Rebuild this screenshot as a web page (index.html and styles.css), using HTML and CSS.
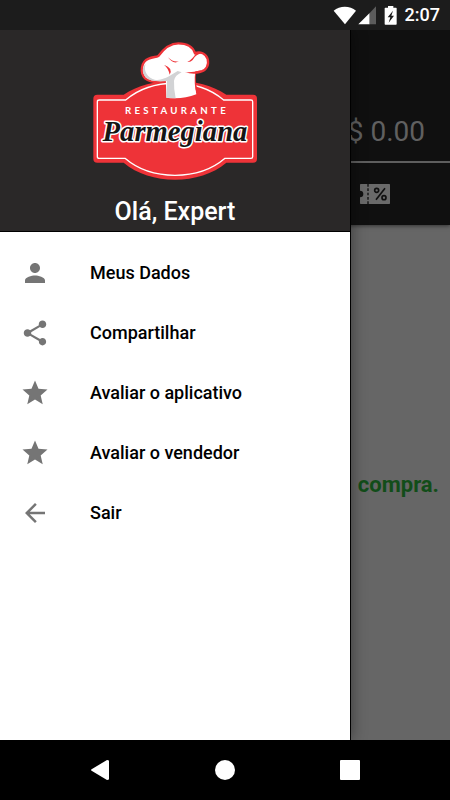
FILE: index.html
```html
<!DOCTYPE html>
<html lang="pt-BR">
<head>
<meta charset="utf-8">
<meta name="viewport" content="width=device-width, initial-scale=1">
<title>Restaurante Parmegiana</title>
<link rel="stylesheet" href="styles.css">
</head>
<body>
<div class="phone">
  <header class="status">
    <svg class="status-icons" width="68" height="20" viewBox="0 0 204 60" aria-hidden="true">
      <path fill="#fff" d="M2 17C20 1 51 1 69 17L36 58Z"/>
      <path fill="#fff" d="M76 58L110 24V58Z"/>
      <path fill="#5c5c5c" d="M110 24L129 4V58H110Z"/>
      <path fill="#fff" d="M165 3h16v5h8q2 0 2 2v47q0 2-2 2h-32q-2 0-2-2V10q0-2 2-2h8Z"/>
      <path fill="#1c1c1c" d="M180 17L164 37h8l-5 16 16-21h-8Z"/>
    </svg>
    <time class="clock">2:07</time>
  </header>

  <div class="screen">
    <main class="page">
      <section class="account">
        <p class="balance">$ 0.00</p>
        <div class="tabs">
          <button class="tab" type="button" aria-label="Cupons">
            <svg width="30" height="20" viewBox="0 0 90 60" aria-hidden="true">
              <path fill="#6a6a6a" d="M2 0H88q2 0 2 2V58q0 2-2 2H2q-2 0-2-2V40a10 10 0 0 0 0-20V2q0-2 2-2Z"/>
              <path stroke="#101010" stroke-width="4" stroke-dasharray="8 5" d="M24 0V60"/>
              <g fill="none" stroke="#101010" stroke-width="5">
                <circle cx="50" cy="19" r="6"/><circle cx="72" cy="41" r="6"/><path d="M75 13L48 47"/>
              </g>
            </svg>
          </button>
        </div>
      </section>
      <section class="empty"><p>compra.</p></section>
    </main>

    <aside class="drawer">
      <div class="profile">
        <svg class="logo" width="180" height="150" viewBox="0 0 540 450" role="img" aria-label="Restaurante Parmegiana">
          <path fill="#ee3338" d="M37 179H116C195 123 345 123 424 179H504Q516 179 516 191V371Q516 383 504 383H424C345 451 195 451 116 383H37Q25 383 25 371V191Q25 179 37 179Z"/>
          <path fill="none" stroke="#fff" stroke-width="4" d="M43 195H122C201 128 337 128 416 195H498Q503 195 503 200V365Q503 370 498 370H420C341 438 199 438 120 370H43Q37 370 37 365V200Q37 195 43 195Z"/>
          <path fill="#fff" stroke="#ee3338" stroke-width="7" stroke-linejoin="round" d="M246 139C222 143 195 142 180 130C165 113 167 81 191 71C203 65 213 67 220 63C236 41 256 25 280 25C305 25 324 36 330 55C345 47 364 57 368 72C373 91 363 106 348 110L330 113Q325 140 337 174"/>
          <path fill="#fff" d="M242 118L331 108Q326 145 334 178Q292 194 244 188Z"/>
          <path fill="#d2d3d5" d="M182 87C174 108 188 129 209 134C226 137 242 129 252 124L278 108L290 112Q270 121 267 137Q266 162 272 190L244 188L246 138C221 141 194 139 182 127C170 113 171 96 182 87Z"/>
          <path fill="#fff" d="M196 78C178 92 181 119 202 130C222 137 242 129 256 118L255 92Z"/>
          <path fill="#ee3338" d="M249 67Q263 82 282 79Q264 89 249 67ZM237 89Q250 99 254 119Q265 99 237 89ZM307 81Q323 73 333 55Q346 51 352 54Q331 58 323 75Q317 82 307 81ZM300 111Q318 114 348 106L348 114Q319 119 300 111Z"/>
          <text class="logo-small" x="276" y="236" text-anchor="middle">RESTAURANTE</text>
          <text class="logo-name" x="270" y="318" text-anchor="middle">Parmegiana</text>
        </svg>
        <h1 class="greeting">Olá, Expert</h1>
      </div>
      <nav class="menu">
        <a class="item" href="#dados">
          <svg width="30" height="30" viewBox="0 0 24 24" aria-hidden="true"><path d="M12 12c2.21 0 4-1.79 4-4s-1.79-4-4-4-4 1.79-4 4 1.79 4 4 4zm0 2c-2.67 0-8 1.34-8 4v2h16v-2c0-2.66-5.33-4-8-4z"/></svg>
          <span>Meus Dados</span>
        </a>
        <a class="item" href="#compartilhar">
          <svg width="30" height="30" viewBox="0 0 24 24" aria-hidden="true"><path d="M18 16.080c-.76 0-1.440.3-1.960.77L8.910 12.700c.05-.23.09-.46.09-.7s-.04-.47-.09-.7l7.050-4.110c.54.5 1.250.81 2.040.81 1.660 0 3-1.340 3-3s-1.340-3-3-3-3 1.340-3 3c0 .24.04.47.09.7L8.040 9.810C7.500 9.310 6.790 9 6 9c-1.660 0-3 1.340-3 3s1.340 3 3 3c.79 0 1.500-.31 2.040-.81l7.120 4.160c-.05.21-.08.43-.08.65 0 1.610 1.310 2.920 2.920 2.920s2.920-1.310 2.920-2.920-1.310-2.920-2.920-2.920z"/></svg>
          <span>Compartilhar</span>
        </a>
        <a class="item" href="#avaliar-aplicativo">
          <svg width="30" height="30" viewBox="0 0 24 24" aria-hidden="true"><path d="M12 17.270L18.180 21l-1.640-7.030L22 9.240l-7.190-.61L12 2 9.190 8.630 2 9.240l5.460 4.730L5.820 21z"/></svg>
          <span>Avaliar o aplicativo</span>
        </a>
        <a class="item" href="#avaliar-vendedor">
          <svg width="30" height="30" viewBox="0 0 24 24" aria-hidden="true"><path d="M12 17.270L18.180 21l-1.640-7.030L22 9.240l-7.190-.61L12 2 9.190 8.630 2 9.240l5.460 4.730L5.820 21z"/></svg>
          <span>Avaliar o vendedor</span>
        </a>
        <a class="item" href="#sair">
          <svg width="30" height="30" viewBox="0 0 24 24" aria-hidden="true"><path d="M20 11H7.830l5.590-5.590L12 4l-8 8 8 8 1.410-1.410L7.830 13H20v-2z"/></svg>
          <span>Sair</span>
        </a>
      </nav>
    </aside>
  </div>

  <footer class="system">
    <button type="button" aria-label="Voltar"><svg width="20" height="20" viewBox="0 0 20 20"><path d="M17 0Q19 0 19 1V19Q19 20 17 20L2 11Q0 10 2 9Z"/></svg></button>
    <button type="button" aria-label="Início"><svg width="20" height="20" viewBox="0 0 20 20"><circle cx="10" cy="10" r="10"/></svg></button>
    <button type="button" aria-label="Recentes"><svg width="20" height="20" viewBox="0 0 20 20"><rect width="20" height="20" rx="1"/></svg></button>
  </footer>
</div>
</body>
</html>
```

FILE: styles.css
```css
* {
  box-sizing: border-box;
}

body {
  margin: 0;
  font-family: Roboto, sans-serif;
  background: #000;
}

h1,
p {
  margin: 0;
}

button {
  border: 0;
  padding: 0;
  background: none;
}

svg {
  display: block;
}

.phone {
  display: flex;
  flex-direction: column;
  min-height: 100vh;
}

.status {
  display: flex;
  justify-content: flex-end;
  align-items: center;
  gap: 4px;
  height: 30px;
  padding-right: 10px;
  background: #1c1c1c;
  color: #fff;
}

.clock {
  font-size: 18px;
  font-weight: 500;
  line-height: 20px;
}

.screen {
  position: relative;
  display: flex;
  flex: 1;
  overflow: hidden;
}

.page {
  display: flex;
  flex: 1;
  flex-direction: column;
  background: #666;
}

.account {
  background: #101010;
  box-shadow: 0 1px 4px rgba(0, 0, 0, 0.5);
}

.balance {
  padding: 82px 25px 9px;
  border-bottom: 2px solid #5e5e5e;
  color: #606060;
  font-size: 28px;
  line-height: 40px;
  text-align: right;
}

.tabs {
  display: grid;
  grid-template-columns: repeat(3, 1fr);
  height: 62px;
}

.tab {
  display: grid;
  grid-column: 3;
  place-items: center;
}

.empty {
  display: grid;
  flex: 1;
  align-items: center;
  padding: 4px 11px 0 0;
  color: #124d19;
  font-size: 22px;
  font-weight: 700;
  line-height: 28px;
  text-align: right;
}

.drawer {
  position: absolute;
  inset: 0 100px 0 0;
  background: #fff;
  box-shadow: 1px 0 0 #000, 2px 0 14px rgba(0, 0, 0, 0.4);
}

.profile {
  display: flex;
  flex-direction: column;
  align-items: center;
  padding: 5px 0 4px;
  border-bottom: 1px solid #000;
  background: #2a2828;
}

.greeting {
  padding-top: 12px;
  color: #fff;
  font-size: 25px;
  font-weight: 500;
  line-height: 30px;
}

.logo-small {
  fill: #fff;
  font-family: Lato, sans-serif;
  font-size: 29px;
  font-weight: 700;
  letter-spacing: 10px;
}

.logo-name {
  fill: #151515;
  stroke: #fff;
  stroke-width: 9px;
  stroke-linejoin: round;
  paint-order: stroke;
  font-family: "Liberation Serif", serif;
  font-size: 86px;
  font-style: italic;
  font-weight: 700;
}

.menu {
  padding-top: 11px;
}

.item {
  display: flex;
  align-items: center;
  gap: 40px;
  height: 60px;
  padding: 0 20px;
  color: #000;
  font-size: 18px;
  font-weight: 500;
  line-height: 24px;
  text-decoration: none;
}

.item svg {
  fill: #757575;
}

.system {
  display: flex;
  justify-content: center;
  height: 60px;
  background: #000;
}

.system button {
  display: grid;
  width: 125px;
  place-items: center;
}

.system svg {
  fill: #fff;
}
```
